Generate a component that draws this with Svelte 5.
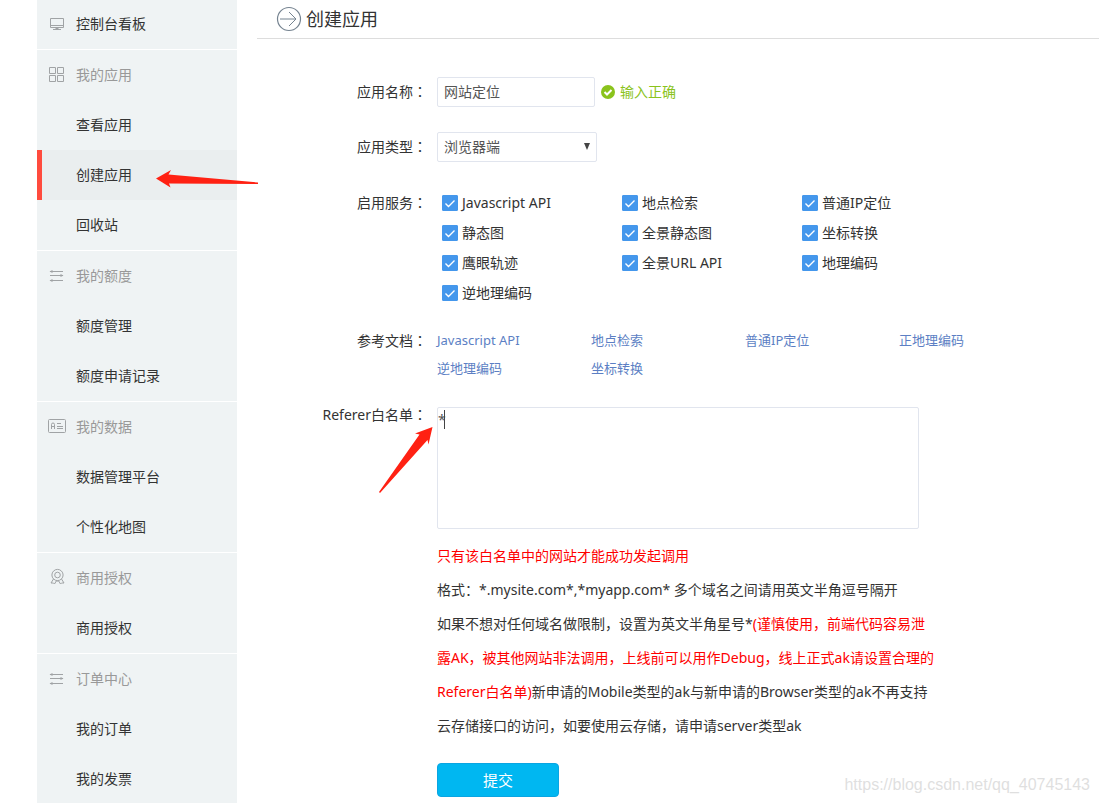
<script>
  const menu = [
    { title: '控制台看板', icon: 'monitor', single: true, items: [] },
    { title: '我的应用', icon: 'grid', items: ['查看应用', '创建应用', '回收站'] },
    { title: '我的额度', icon: 'lines', items: ['额度管理', '额度申请记录'] },
    { title: '我的数据', icon: 'card', items: ['数据管理平台', '个性化地图'] },
    { title: '商用授权', icon: 'medal', items: ['商用授权'] },
    { title: '订单中心', icon: 'lines', items: ['我的订单', '我的发票'] }
  ];
  const active = '创建应用';

  const docs = ['Javascript API', '地点检索', '普通IP定位', '正地理编码', '逆地理编码', '坐标转换'];

  let services = $state([
    { name: 'Javascript API', on: true },
    { name: '地点检索', on: true },
    { name: '普通IP定位', on: true },
    { name: '静态图', on: true },
    { name: '全景静态图', on: true },
    { name: '坐标转换', on: true },
    { name: '鹰眼轨迹', on: true },
    { name: '全景URL API', on: true },
    { name: '地理编码', on: true },
    { name: '逆地理编码', on: true }
  ]);
  let appName = $state('网站定位');
  let appType = $state('浏览器端');
  let referer = $state('*');
</script>

{#snippet menuIcon(name)}
  <svg class="menu-icon" viewBox="0 0 20 20" width="20" height="20" fill="none" stroke="#a0a3a5" aria-hidden="true">
    {#if name === 'monitor'}
      <path d="M3.5 4.5h13v9h-13z M3.5 11.5h13 M6 15.5h8" />
      <path d="M8.5 14.5h3" />
    {:else if name === 'grid'}
      <path d="M2.5 2.5h6v6h-6z M10.5 2.5h6v6h-6z M2.5 10.5h6v6h-6z M10.5 10.5h6v6h-6z" />
    {:else if name === 'lines'}
      <path d="M3 5.500h13 M3 9.500h13 M3 14.500h13" />
      <path d="M5.500 4v3L2.500 5.500z M13.500 8v3l3-1.500z M5.500 13v3l-3-1.500z" fill="#a0a3a5" stroke="none" />
    {:else if name === 'card'}
      <rect x="1.5" y="2.5" width="17" height="13" rx="1" />
      <path d="M4.500 12V7.500a1.500 1.500 0 0 1 3 0V12 M4.500 9.500h3 M10 6.500h4 M10 9.500h6 M10 11.500h6" />
    {:else}
      <circle cx="10.5" cy="7" r="5.600" />
      <circle cx="10.5" cy="7" r="2.800" />
      <path d="M6.500 11l-2.500 4h2.500l1 1 1.800-3h2.400l1.800 3 1-1H17l-2.500-4" />
    {/if}
  </svg>
{/snippet}

<div class="page">
  <nav class="sidebar">
    {#each menu as group}
      <section class="group">
        <div class="menu-row title" class:single={group.single}>
          {@render menuIcon(group.icon)}
          {#if group.single}
            <a href="#board">{group.title}</a>
          {:else}
            <span>{group.title}</span>
          {/if}
        </div>
        {#each group.items as item}
          <div class="menu-row item" class:active={item === active}>
            <a href="#menu">{item}</a>
            {#if item === active}
              <svg class="arrow-menu" viewBox="0 0 104 20" width="104" height="20" aria-hidden="true">
                <path d="M1 9.500L16 1 13.500 5.500 103 13.500V15L14 14.500 15.500 18.500z" fill="#ff2113" />
              </svg>
            {/if}
          </div>
        {/each}
      </section>
    {/each}
  </nav>

  <main class="main">
    <header class="heading">
      <svg viewBox="0 0 26 26" width="26" height="26" fill="none" stroke="#758390" aria-hidden="true">
        <circle cx="13" cy="13" r="11.5" stroke-width="1.200" />
        <path d="M4 13h16 M13 6l7 7-7 7" />
      </svg>
      <h1>创建应用</h1>
    </header>

    <form class="form" onsubmit={(e) => e.preventDefault()}>
      <label class="label" for="app-name">应用名称<i>：</i></label>
      <div class="field name-field">
        <input id="app-name" class="text" type="text" bind:value={appName} />
        <span class="valid">
          <svg viewBox="0 0 14 14" width="14" height="14" aria-hidden="true">
            <circle cx="7" cy="7" r="7" fill="#8ac31c" />
            <path d="M3.500 7l2.500 2.500 4.500-4.500" fill="none" stroke="#fff" stroke-width="2" />
          </svg>
          输入正确
        </span>
      </div>

      <label class="label type-row" for="app-type">应用类型<i>：</i></label>
      <div class="field type-row select-wrap">
        <select id="app-type" bind:value={appType}>
          <option>浏览器端</option>
          <option>服务端</option>
        </select>
        <svg class="caret-down" viewBox="0 0 6 7" width="6" height="7" aria-hidden="true">
          <path d="M0 0h6L3 7z" fill="#444" />
        </svg>
      </div>

      <span class="label services-row">启用服务<i>：</i></span>
      <div class="field services services-row">
        {#each services as service}
          <label class="check">
            <input type="checkbox" bind:checked={service.on} />
            {service.name}
          </label>
        {/each}
      </div>

      <span class="label docs-row">参考文档<i>：</i></span>
      <div class="field docs docs-row">
        {#each docs as doc}
          <a href="#doc">{doc}</a>
        {/each}
      </div>

      <label class="label referer-row" for="referer">Referer白名单<i>：</i></label>
      <div class="field referer-row referer">
        <textarea id="referer" bind:value={referer}></textarea>
        <span class="cursor"></span>
        <svg class="arrow-referer" viewBox="0 0 56 68" width="56" height="68" aria-hidden="true">
          <path d="M54.500 1L37 7.500 41.500 8.500 1 66 2 67 49.500 14 50.500 18.500z" fill="#ff2113" />
        </svg>
      </div>

      <div class="field help">
        <p class="red">只有该白名单中的网站才能成功发起调用</p>
        <p>格式：*.mysite.com*,*myapp.com* 多个域名之间请用英文半角逗号隔开</p>
        <p>
          如果不想对任何域名做限制，设置为英文半角星号*<span class="red">(谨慎使用，前端代码容易泄露AK，被其他网站非法调用，上线前可以用作Debug，线上正式ak请设置合理的Referer白名单)</span>新申请的Mobile类型的ak与新申请的Browser类型的ak不再支持云存储接口的访问，如要使用云存储，请申请server类型ak
        </p>
      </div>

      <button class="submit" type="submit">提交</button>
    </form>
  </main>

  <div class="watermark">https://blog.csdn.net/qq_40745143</div>
</div>

<style>
  :global(body) {
    margin: 0;
    background: #fff;
  }

  .page {
    position: relative;
    display: flex;
    gap: 20px;
    height: 100vh;
    padding-left: 37px;
    overflow: hidden;
    box-sizing: border-box;
    color: #333;
    font: 14px/20px "Noto Sans", "Noto Sans CJK SC", sans-serif;
  }

  a {
    color: inherit;
    text-decoration: none;
  }

  /* label colons sit in the middle of their cell */
  i {
    font-family: "Noto Sans CJK TC", sans-serif;
    font-style: normal;
    line-height: 1;
  }

  /* sidebar */
  .sidebar {
    flex: 0 0 200px;
    background: #eff3f4;
  }

  .group + .group {
    border-top: 1px solid #fff;
  }

  .menu-row {
    position: relative;
    display: flex;
    align-items: center;
    height: 50px;
    box-sizing: border-box;
  }

  .title {
    gap: 9px;
    padding-left: 10px;
    color: #999;
  }

  .single {
    height: 49px;
    padding-bottom: 1px;
    color: #333;
  }

  .item {
    padding-left: 39px;
  }

  .active {
    padding-left: 34px;
    border-left: 5px solid #ff4b3e;
    background: #eaeeef;
  }

  .arrow-menu {
    position: absolute;
    top: 19px;
    left: 113px;
    z-index: 1;
  }

  /* content */
  .main {
    flex: 1;
    min-width: 0;
  }

  .heading {
    display: flex;
    align-items: center;
    gap: 4px;
    height: 38px;
    padding-left: 19px;
    border-bottom: 1px solid #ddd;
  }

  h1 {
    margin: 0;
    font-size: 18px;
    font-weight: 400;
    line-height: 24px;
  }

  .form {
    display: grid;
    grid-template-columns: 170px minmax(0, 1fr);
    column-gap: 10px;
    padding-top: 38px;
  }

  .label {
    line-height: 30px;
    text-align: right;
  }

  .type-row {
    margin-top: 25px;
  }

  .services-row {
    margin-top: 26px;
  }

  .docs-row {
    margin-top: 18px;
  }

  .referer-row {
    margin-top: 25px;
  }

  .name-field {
    display: flex;
    align-items: center;
    gap: 6px;
  }

  .text,
  select,
  textarea {
    box-sizing: border-box;
    border: 1px solid #e1e5ee;
    border-radius: 2px;
    outline: none;
    background: #fff;
    color: #555;
    font: inherit;
  }

  .text {
    width: 158px;
    height: 30px;
    padding: 0 6px 2px;
  }

  .valid {
    display: flex;
    align-items: center;
    gap: 5px;
    color: #8ac31c;
  }

  .select-wrap {
    position: relative;
    width: 160px;
  }

  select {
    display: block;
    width: 100%;
    height: 30px;
    padding: 0 6px;
    appearance: none;
  }

  .caret-down {
    position: absolute;
    top: 11px;
    right: 7px;
    pointer-events: none;
  }

  .services {
    display: grid;
    grid-template-columns: repeat(3, 180px);
    padding-left: 5px;
  }

  .check {
    display: flex;
    align-items: center;
    gap: 4px;
    height: 30px;
  }

  .check input {
    width: 16px;
    height: 16px;
    margin: 0;
    border: 1px solid #4497ec;
    border-radius: 1px;
    background: #fff;
    appearance: none;
  }

  .check input:checked {
    background: #4497ec url("data:image/svg+xml,%3Csvg xmlns='http://www.w3.org/2000/svg' viewBox='0 0 14 14'%3E%3Cpath d='M2.500 7.500l3 3 6-6' fill='none' stroke='%23fff' stroke-width='1.400'/%3E%3C/svg%3E") center / 14px no-repeat;
  }

  .docs {
    display: grid;
    grid-template-columns: repeat(4, 154px);
    color: #5c7fc4;
    font-size: 13px;
    line-height: 28px;
  }

  .referer {
    position: relative;
    width: 482px;
  }

  .label.referer-row {
    line-height: 16px;
  }

  textarea {
    display: block;
    width: 100%;
    height: 122px;
    padding: 2px 0;
    resize: none;
  }

  .cursor {
    position: absolute;
    top: 3px;
    left: 7px;
    width: 1px;
    height: 19px;
    background: #444;
  }

  .arrow-referer {
    position: absolute;
    top: 19px;
    left: -59px;
  }

  .help {
    grid-column: 2;
    width: 500px;
    margin-top: 10px;
    line-height: 34px;
  }

  .help p {
    margin: 0;
  }

  .red {
    color: #f00;
  }

  .submit {
    grid-column: 2;
    width: 122px;
    height: 34px;
    margin-top: 20px;
    padding: 0;
    border: 1px solid #0aa5e2;
    border-radius: 4px;
    background: #00b7f1;
    color: #fff;
    font: inherit;
    font-size: 15px;
  }

  .watermark {
    position: absolute;
    right: 9px;
    bottom: 8px;
    color: #dfdfdf;
    font: 16px/20px "Liberation Sans", sans-serif;
  }
</style>
